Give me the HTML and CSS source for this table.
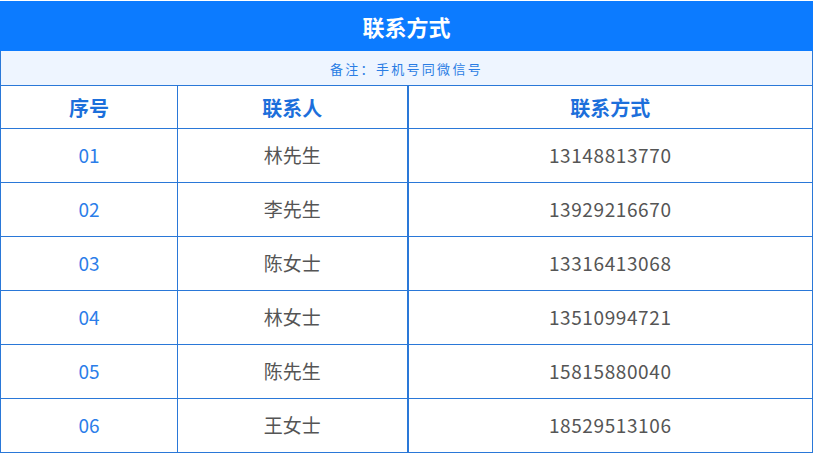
FILE: index.html
```html
<!DOCTYPE html>
<html lang="zh-CN">
<head>
<meta charset="utf-8">
<title>联系方式</title>
<link rel="stylesheet" href="styles.css">
</head>
<body>
<table class="sheet">
  <colgroup>
    <col class="c1">
    <col class="c2">
    <col class="c3">
  </colgroup>
  <thead>
    <tr class="title"><td colspan="3">联系方式</td></tr>
    <tr class="note"><td colspan="3">备注：手机号同微信号</td></tr>
    <tr class="head"><th>序号</th><th>联系人</th><th class="wide">联系方式</th></tr>
  </thead>
  <tbody>
    <tr><td class="num">01</td><td class="name">林先生</td><td class="phone">13148813770</td></tr>
    <tr><td class="num">02</td><td class="name">李先生</td><td class="phone">13929216670</td></tr>
    <tr><td class="num">03</td><td class="name">陈女士</td><td class="phone">13316413068</td></tr>
    <tr><td class="num">04</td><td class="name">林女士</td><td class="phone">13510994721</td></tr>
    <tr><td class="num">05</td><td class="name">陈先生</td><td class="phone">15815880040</td></tr>
    <tr><td class="num">06</td><td class="name">王女士</td><td class="phone">18529513106</td></tr>
  </tbody>
</table>
</body>
</html>
```
FILE: styles.css
```css
html, body {
  margin: 0;
  padding: 0;
  background: #ffffff;
}
body {
  padding-top: 1px;
  font-family: "Noto Sans CJK SC", "Noto Sans", sans-serif;
}
.sheet {
  width: 812px;
  border-collapse: collapse;
  table-layout: fixed;
}
.c1 { width: 177px; }
.c2 { width: 230px; }
.c3 { width: 405px; }
.sheet td, .sheet th {
  padding: 0;
  text-align: center;
  border: 1px solid #2a78d8;
}
.title td {
  height: 48px;
  background: #0c7bff;
  border-color: #0c7bff;
  color: #ffffff;
  font-size: 22px;
  font-weight: 700;
}
.note td {
  height: 34px;
  background: #eef5ff;
  color: #2a7de4;
  font-size: 13px;
  letter-spacing: 2.3px;
  border-top: none;
}
.head th {
  height: 42px;
  color: #1c6fdb;
  font-size: 20px;
  font-weight: 700;
}
.sheet .wide, .sheet .phone {
  border-left: 2px solid #2a78d8;
}
.sheet tbody td {
  height: 51px;
  padding-bottom: 2px;
  font-size: 19px;
}
.num {
  color: #2b7de9;
}
.name, .phone {
  color: #555555;
}
.phone {
  letter-spacing: 0.6px;
}
```
